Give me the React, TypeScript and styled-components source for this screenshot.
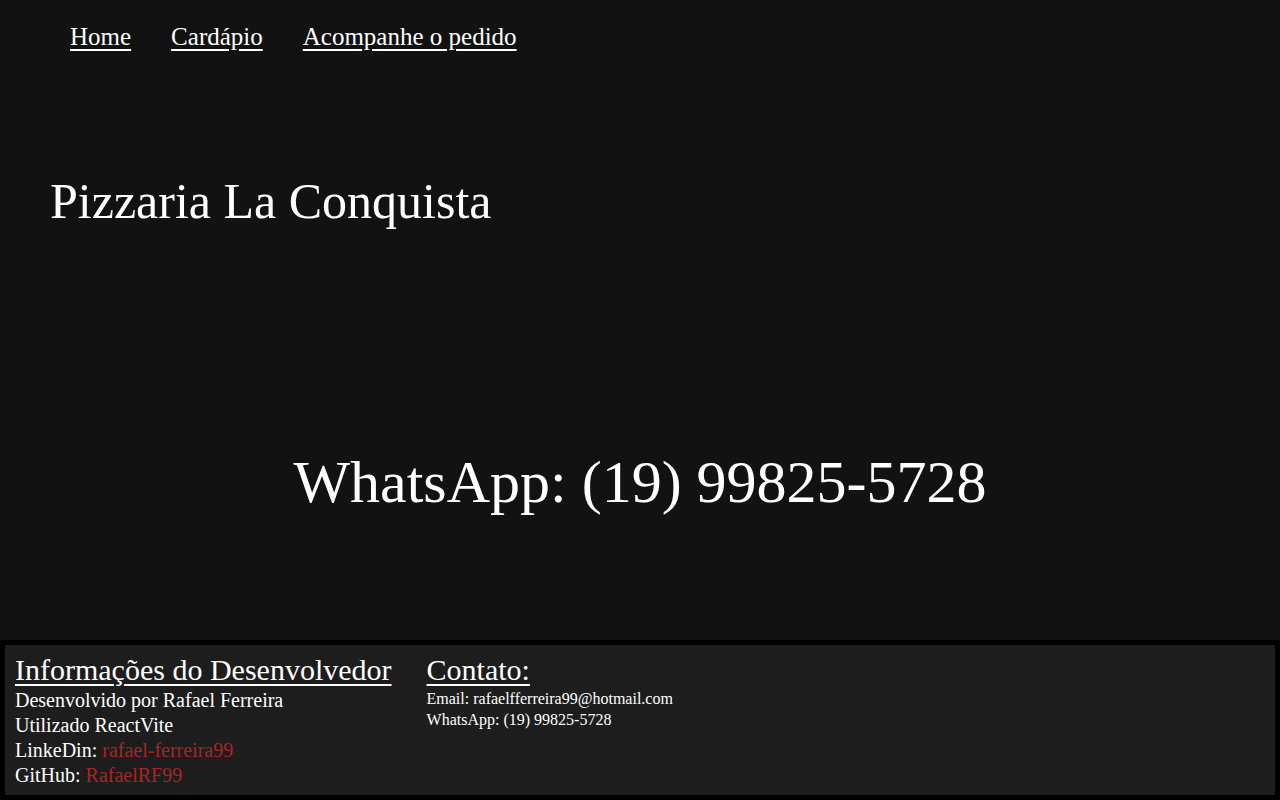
import React from "react";
import styled, { createGlobalStyle } from "styled-components";

const GlobalStyle = createGlobalStyle`
  html, body {
    margin: 0;
    padding: 0;
    background: #121212;
    color: #ffffff;
    font-family: "Liberation Serif", "Times New Roman", serif;
  }
  * { box-sizing: border-box; }
`;

const Page = styled.div`
  display: flex;
  flex-direction: column;
  min-height: 100vh;
  background: #121212;
`;

const Nav = styled.nav`
  display: flex;
  gap: 40px;
  padding: 23px 0 0 70px;
  font-size: 25px;
  line-height: normal;
`;

const NavLink = styled.a`
  color: #ffffff;
  text-decoration: underline;
  text-decoration-thickness: 2px;
  text-underline-offset: 4px;
  cursor: pointer;
`;

const Title = styled.h1`
  margin: 121px 0 0 50px;
  font-size: 50px;
  font-weight: 400;
  line-height: normal;
`;

const Phone = styled.h2`
  margin: 218px 0 0 0;
  text-align: center;
  font-size: 60px;
  font-weight: 400;
  line-height: normal;
`;

const Footer = styled.footer`
  margin-top: auto;
  display: flex;
  gap: 35px;
  border: 5px solid #000000;
  background: #1d1d1d;
  padding: 7px 10px 7px;
`;

const Column = styled.div`
  display: flex;
  flex-direction: column;
`;

const FooterTitle = styled.h3`
  margin: 0;
  font-size: 30px;
  font-weight: 400;
  line-height: 36px;
  text-decoration: underline;
  text-decoration-thickness: 2px;
  text-underline-offset: 4px;
`;

const InfoLine = styled.p<{ $small?: boolean }>`
  margin: 0;
  font-size: ${(p) => (p.$small ? "16px" : "20px")};
  line-height: ${(p) => (p.$small ? "21px" : "25px")};
`;

const RedLink = styled.a`
  color: #a82525;
  text-decoration: none;
`;

export default function App() {
  return (
    <Page>
      <GlobalStyle />
      <Nav>
        <NavLink>Home</NavLink>
        <NavLink>Cardápio</NavLink>
        <NavLink>Acompanhe o pedido</NavLink>
      </Nav>
      <Title>Pizzaria La Conquista</Title>
      <Phone>WhatsApp: (19) 99825-5728</Phone>
      <Footer>
        <Column>
          <FooterTitle>Informações do Desenvolvedor</FooterTitle>
          <InfoLine>Desenvolvido por Rafael Ferreira</InfoLine>
          <InfoLine>Utilizado ReactVite</InfoLine>
          <InfoLine>
            LinkeDin: <RedLink>rafael-ferreira99</RedLink>
          </InfoLine>
          <InfoLine>
            GitHub: <RedLink>RafaelRF99</RedLink>
          </InfoLine>
        </Column>
        <Column>
          <FooterTitle>Contato:</FooterTitle>
          <InfoLine $small>Email: rafaelfferreira99@hotmail.com</InfoLine>
          <InfoLine $small>WhatsApp: (19) 99825-5728</InfoLine>
        </Column>
      </Footer>
    </Page>
  );
}
